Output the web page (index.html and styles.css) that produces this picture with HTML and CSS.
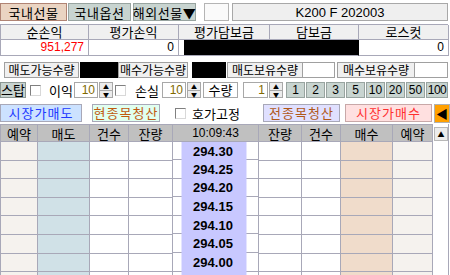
FILE: index.html
```html
<!DOCTYPE html>
<html lang="ko">
<head>
    <meta charset="UTF-8">
    <title>K200 F 202003 주문</title>
    <link rel="stylesheet" href="styles.css">
</head>
<body>
    <div class="top">
        <div class="tab on">국내선물</div>
        <div class="tab">국내옵션</div>
        <div class="tab">해외선물▼</div>
        <div class="blank"></div>
        <div class="code">K200 F 202003</div>
    </div>

    <div class="summary">
        <div class="head">순손익</div>
        <div class="head">평가손익</div>
        <div class="head">평가담보금</div>
        <div class="head">담보금</div>
        <div class="head">로스컷</div>
        <div class="val red">951,277</div>
        <div class="val">0</div>
        <div class="val"><div class="mask"></div></div>
        <div class="val black"></div>
        <div class="val">0</div>
    </div>

    <div class="qty">
        <div class="label l1">매도가능수량</div>
        <div class="blackbox b1"></div>
        <div class="label l2">매수가능수량</div>
        <div class="blackbox b2"></div>
        <div class="label l3">매도보유수량</div>
        <div class="whitebox w1"></div>
        <div class="label l4">매수보유수량</div>
        <div class="whitebox w2"></div>
    </div>

    <div class="stop">
        <div class="btn-stop">스탑</div>
        <div class="check c1"></div>
        <span class="txt t1">이익</span>
        <div class="spin s1">10</div>
        <div class="arrows"><span>▲</span><span>▼</span></div>
        <div class="check c2"></div>
        <span class="txt t2">손실</span>
        <div class="spin s2">10</div>
        <div class="arrows"><span>▲</span><span>▼</span></div>
        <div class="qty-label">수량</div>
        <div class="spin s3">1</div>
        <div class="arrows"><span>▲</span><span>▼</span></div>
        <div class="nums">
            <div class="num">1</div>
            <div class="num">2</div>
            <div class="num">3</div>
            <div class="num">5</div>
            <div class="num">10</div>
            <div class="num">20</div>
            <div class="num">50</div>
            <div class="num wide">100</div>
        </div>
    </div>

    <div class="orders">
        <div class="obtn sell">시장가매도</div>
        <div class="obtn clear-one">현종목청산</div>
        <div class="check c3"></div>
        <span class="txt t3">호가고정</span>
        <div class="right">
            <div class="obtn clear-all">전종목청산</div>
            <div class="obtn buy">시장가매수</div>
            <div class="fold">◀</div>
        </div>
    </div>

    <div class="book">
        <table class="hoga">
            <colgroup>
                <col style="width:37px"><col style="width:52px"><col style="width:39px"><col style="width:44px">
                <col style="width:86px">
                <col style="width:43px"><col style="width:39px"><col style="width:52px"><col style="width:40px">
            </colgroup>
            <thead>
                <tr>
                    <th>예약</th><th>매도</th><th>건수</th><th>잔량</th>
                    <th class="time">10:09:43</th>
                    <th>잔량</th><th>건수</th><th>매수</th><th>예약</th>
                </tr>
            </thead>
            <tbody id="rows"></tbody>
        </table>
        <div class="scroll">
            <div class="up">▲</div>
        </div>
    </div>

    <script>
        // last row only peeks in under the frame, its price stays hidden
        const prices = ['294.30', '294.25', '294.20', '294.15', '294.10', '294.05', '294.00', ''];

        document.getElementById('rows').innerHTML = prices.map(p => `
            <tr>
                <td class="rsv"></td><td class="ask"></td><td></td><td></td>
                <td class="price">${p}</td>
                <td></td><td></td><td class="bid"></td><td class="rsv"></td>
            </tr>`).join('');
    </script>
</body>
</html>
```

FILE: styles.css
```css
body {
    margin: 0;
    width: 450px;
    height: 275px;
    overflow: hidden;
    background: #fff;
    font-family: "Noto Sans CJK KR", "Liberation Sans", sans-serif;
    font-size: 13px;
    line-height: 15px;
    color: #000;
}

.top > *,
.qty > *,
.stop > *,
.orders > *,
.right > *,
.nums > * {
    flex-shrink: 0;
    white-space: nowrap;
}

/* top tabs */
.top {
    display: flex;
    padding-top: 3px;
    height: 18px;
}

.tab {
    box-sizing: border-box;
    width: 63px;
    height: 18px;
    margin-left: 2px;
    border: 1px solid #98a4a0;
    background: #c8d4d0;
    display: flex;
    align-items: center;
    justify-content: center;
    letter-spacing: 0.5px;
}

.tab.on {
    width: 67px;
    margin-left: 0;
    border-color: #b08474;
    background: #ead4c2;
}

.tab.on + .tab { margin-left: 1px; }

.blank {
    box-sizing: border-box;
    width: 25px;
    height: 18px;
    margin-left: 8px;
    border: 1px solid #b4b4b4;
    background: #fafafa;
}

.code {
    box-sizing: border-box;
    width: 216px;
    height: 18px;
    margin-left: 3px;
    border: 1px solid #a8a8a8;
    background: #efefef;
    font-family: "Liberation Sans", sans-serif;
    font-size: 13px;
    display: flex;
    align-items: center;
    justify-content: center;
}

/* summary */
.summary {
    display: grid;
    grid-template-columns: 88px 90px 91px 89px 90px;
    grid-template-rows: 15px 16px;
    margin-top: 3px;
    width: 448px;
    box-sizing: border-box;
    border-top: 1px solid #a8a8b8;
    border-left: 1px solid #a8a8b8;
}

.summary > div {
    border-right: 1px solid #a8a8b8;
    border-bottom: 1px solid #a8a8b8;
}

.head {
    background: #f0f0f0;
    text-align: center;
    line-height: 14px;
}

.val {
    background: #fff;
    text-align: right;
    padding-right: 4px;
    font-family: "Liberation Sans", sans-serif;
    font-size: 12px;
    line-height: 15px;
}

.val.red { color: #ff0000; }
.val.black { background: #000; border-right-color: #000; }

.mask {
    height: 100%;
    margin-left: 5px;
    margin-right: -5px;
    background: #000;
}

/* quantity row */
.qty {
    display: flex;
    margin-top: 6px;
    height: 16px;
    font-size: 12px;
}

.label {
    box-sizing: border-box;
    border: 1px solid #a0a0a0;
    background: #f0f0f0;
    display: flex;
    justify-content: center;
    line-height: 14px;
}

.l1 { width: 75px; margin-left: 4px; }
.l2 { width: 70px; }
.l3 { width: 76px; margin-left: 1px; }
.l4 { width: 78px; margin-left: 2px; }

.blackbox { background: #000; }
.b1 { width: 38px; margin-left: 1px; }
.b2 { width: 34px; margin-left: 4px; }

.whitebox {
    box-sizing: border-box;
    border: 1px solid #a0a0a0;
    border-left: none;
    background: #fff;
}

.w1 { width: 32px; }
.w2 { width: 33px; }

/* stop row */
.stop {
    display: flex;
    align-items: center;
    margin-top: 4px;
    height: 16px;
}

.btn-stop {
    box-sizing: border-box;
    width: 26px;
    height: 16px;
    border: 1px solid #8c9894;
    background: #c8d4d0;
    text-align: center;
    line-height: 14px;
}

.check {
    box-sizing: border-box;
    width: 11px;
    height: 11px;
    border: 1px solid #808080;
    border-right-color: #d8d8d8;
    border-bottom-color: #d8d8d8;
    background: #fff;
}

.c1 { margin-left: 4px; }
.c2 { margin-left: 2px; }

.t1 { margin-left: 8px; width: 25px; }
.t2 { margin-left: 9px; width: 27px; }

.spin {
    box-sizing: border-box;
    width: 24px;
    height: 16px;
    border: 1px solid #a8a8a8;
    background: #fff;
    text-align: right;
    padding-right: 2px;
    color: #806800;
    font-family: "Liberation Sans", sans-serif;
    font-size: 12px;
    line-height: 14px;
}

.s3 { width: 25px; margin-left: 5px; }

.arrows {
    box-sizing: border-box;
    width: 14px;
    height: 16px;
    margin-left: 1px;
    border: 1px solid #a8a8a8;
    background: #ececec;
    display: flex;
    flex-direction: column;
    font-size: 6px;
    line-height: 7px;
    text-align: center;
}

.arrows span { height: 7px; }
.arrows span + span { border-top: 1px solid #a8a8a8; }

.qty-label {
    box-sizing: border-box;
    width: 35px;
    height: 16px;
    margin-left: 2px;
    border: 1px solid #a8a8a8;
    background: #fff;
    text-align: center;
    line-height: 14px;
}

.nums {
    display: flex;
    margin-left: 3px;
}

.num {
    box-sizing: border-box;
    width: 19px;
    height: 16px;
    margin-left: 1px;
    border: 1px solid #98a4a0;
    background: #c8d4d0;
    text-align: center;
    font-family: "Liberation Sans", sans-serif;
    font-size: 12px;
    line-height: 14px;
}

.num:first-child { margin-left: 0; }
.num.wide { width: 22px; letter-spacing: -0.5px; }

/* order buttons */
.orders {
    display: flex;
    align-items: center;
    margin-top: 6px;
    height: 18px;
}

.obtn {
    box-sizing: border-box;
    height: 18px;
    border: 1px solid #a8a8b8;
    text-align: center;
    line-height: 16px;
    letter-spacing: 1px;
}

.sell { width: 82px; background: #cce2ff; color: #2038ff; }
.clear-one { width: 68px; margin-left: 10px; background: #e0fff0; color: #c05a10; }
.c3 { margin-left: 15px; }
.t3 { margin-left: 6px; }

.right {
    display: flex;
    margin-left: auto;
    width: 187px;
}

.clear-all { width: 77px; background: #e0e0ff; color: #b05818; }
.buy { width: 87px; margin-left: 5px; background: #ffe0e0; color: #ff3030; border-color: #c8a8a8; }

.fold {
    box-sizing: border-box;
    width: 16px;
    height: 19px;
    margin-left: 2px;
    border: 1px solid #b0b0b0;
    background: #ffa000;
    font-size: 12px;
    line-height: 17px;
    text-align: center;
}

/* order book */
.book {
    display: flex;
    margin-top: 2px;
}

.hoga {
    width: 432px;
    table-layout: fixed;
    border-collapse: collapse;
}

.hoga th,
.hoga td {
    border: 1px solid #a8a8b8;
    padding: 0;
}

.hoga th {
    height: 16px;
    background: #c0c0c0;
    font-weight: normal;
    text-align: center;
    line-height: 15px;
}

.hoga th.time {
    font-family: "Liberation Sans", sans-serif;
    font-size: 12px;
}

.hoga td {
    height: 17.6px;
    background: #fff;
}

.hoga td.rsv { background: #f5f2ee; }
.hoga td.ask { background: #d0e1e7; }
.hoga td.bid { background: #f0dccb; }

.hoga td.price {
    border-bottom: none;
    border-top: none;
    padding: 0 13px 0 8px;
    text-align: center;
    font-family: "Liberation Sans", sans-serif;
    font-weight: bold;
    font-size: 13px;
    background: linear-gradient(to right, transparent 8px, #c8c8ff 8px, #c8c8ff 73px, transparent 73px),
                linear-gradient(#a8a8b8, #a8a8b8) bottom / 100% 1px no-repeat;
    background-color: #fff;
}

.scroll {
    box-sizing: border-box;
    width: 16px;
    height: 160px;
    border-right: 1px solid #a8a8b8;
    background: #fff;
    padding: 3px 0 0 1px;
}

.up {
    box-sizing: border-box;
    width: 14px;
    height: 14px;
    border: 1px solid #b8b8b8;
    background: #ececec;
    font-size: 7px;
    line-height: 12px;
    text-align: center;
}
```
